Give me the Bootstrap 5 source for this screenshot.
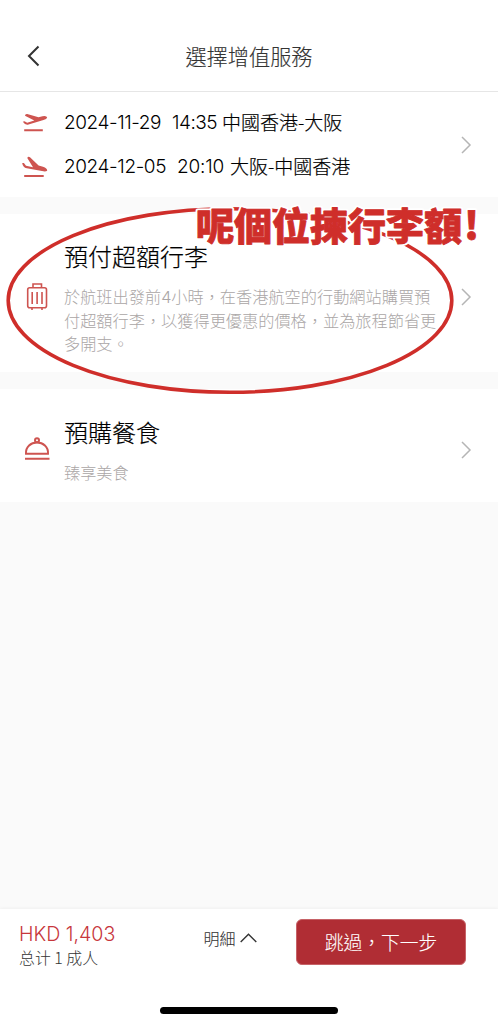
<!DOCTYPE html>
<html lang="zh-Hant">
<head>
<meta charset="utf-8">
<meta name="viewport" content="width=device-width, initial-scale=1">
<title>選擇增值服務</title>
<link href="https://cdn.jsdelivr.net/npm/bootstrap@5.3.0/dist/css/bootstrap.min.css" rel="stylesheet">
<style>
body{font-family:"Noto Sans CJK TC",sans-serif;background:#fafafa;color:#000;height:1024px;overflow:hidden}
svg{display:block;flex-shrink:0}
.latin{font-family:Inter,"Liberation Sans",sans-serif;display:inline-block;white-space:pre;font-weight:300;-webkit-text-stroke:0}
.top-bar{height:92px;padding:20px 26px 0;border-bottom:1px solid #e6e6e6}
.top-title{font-size:21.2px;font-weight:300;color:#333;padding-right:15px;-webkit-text-stroke:.15px #333}
.flights{height:105px;padding:9px 26px 9px 22px}
.flight-line{height:44px;font-size:19px;font-weight:300;line-height:44px;white-space:nowrap;-webkit-text-stroke:.2px #000}
.flight-line .route{line-height:42px;height:44px}
.flight-line .latin{font-weight:350}
.flight-icon{width:42px}
.date-a{width:108px;letter-spacing:-.42px}
.time-a{width:50px;letter-spacing:-.5px}
.date-b{width:113px;letter-spacing:-.4px}
.time-b{width:53px;letter-spacing:-.2px}
.service{margin-top:17px;padding:0 26px 0 22px}
.luggage{height:158px;padding-top:8px}
.meal{height:113px}
.service-name{font-size:24px;line-height:34px;font-weight:300;margin:0 0 12px;-webkit-text-stroke:.2px #000}
.service-note{font-size:16.200px;line-height:22.800px;font-weight:300;color:#aaa6a6;margin:0;white-space:nowrap}
.red{color:#ce5450}
.bottom-bar{height:115px;box-shadow:0 -1px 3px rgba(0,0,0,.045)}
.total{width:115px;margin-left:19px;padding-top:12px}
.price{font-size:19.600px;line-height:24px;color:#c7363b;white-space:nowrap}
.price .latin{font-weight:350}
.people{font-size:15.900px;line-height:23px;font-weight:300;color:#333}
.details{font-size:16px;font-weight:300;color:#333;height:24px;margin:17px 0 0 69.500px;-webkit-text-stroke:.1px #333}
.btn-next,.btn-next:hover{width:170px;height:46px;margin:10px 32px 0 auto;background:#b02d34;color:#fff;border:1px solid #c66267;border-radius:6px;font-size:18.800px;font-weight:300;padding:0;line-height:44px;-webkit-text-stroke:.1px #fff}
.home-line{width:178px;height:7px;border-radius:4px;background:#000;left:160px;bottom:10px}
.mark-up{left:0;top:0;pointer-events:none}
.mark-up text{font-family:"Noto Sans CJK TC",sans-serif;font-weight:900;font-size:38px;fill:#cf2e2a;stroke:#cf2e2a;stroke-width:.8px;stroke-linejoin:round}
.mark-up .halo{fill:#fff;stroke:#fff;stroke-width:4.500px}
</style>
<script src="https://cdn.jsdelivr.net/npm/bootstrap@5.3.0/dist/js/bootstrap.bundle.min.js"></script>
</head>
<body class="d-flex flex-column position-relative">
<header class="top-bar bg-white d-flex align-items-center">
  <svg width="15" height="22" viewBox="0 0 15 22" fill="none" stroke="#333" stroke-width="2"><path d="M12.500 1.500 3 11l9.500 9.500"/></svg>
  <div class="top-title flex-grow-1 text-center">選擇增值服務</div>
</header>
<section class="flights bg-white d-flex align-items-center">
  <div class="flex-grow-1">
    <div class="flight-line d-flex align-items-center">
      <div class="flight-icon red"><svg width="26" height="20" viewBox="0 0 26 20" fill="currentColor"><path d="M.8 8.800 2.500 8.300 5.200 9.800 12.300 7.500 3 2.700Q3 .9 5.200 1.100L16.500 4.300 20.500 3.200Q24.500 2.300 25.200 4.500 24.800 6.200 21.500 7L6.500 11.500Q3.200 12.400.8 8.800ZM2.200 16.300h18.600v1.900H2.200z"/></svg></div>
      <span class="latin date-a">2024-11-29</span><span class="latin time-a">14:35</span><span class="route">中國香港-大阪</span>
    </div>
    <div class="flight-line d-flex align-items-center">
      <div class="flight-icon red"><svg width="26" height="24" viewBox="0 0 26 24" fill="currentColor"><path d="M.2 8 1.900 8.100 4 10.800 11 12.200 5.300 3Q6 1 8 2.200L16.600 10.600 21 11.700Q25.300 13 25.200 15.800 23.500 17 20 16.100L4.800 13.300Q.8 12.400.2 8ZM2.200 20h19.500v2H2.200z"/></svg></div>
      <span class="latin date-b">2024-12-05</span><span class="latin time-b">20:10</span><span class="route">大阪-中國香港</span>
    </div>
  </div>
  <svg width="11" height="18" viewBox="0 0 11 18" fill="none" stroke="#b5b5b5" stroke-width="1.500"><path d="m1 1 8 8-8 8"/></svg>
</section>
<main class="flex-grow-1">
  <section class="service luggage bg-white d-flex align-items-center">
    <div class="flight-icon red"><svg width="30" height="30" viewBox="0 0 30 30" fill="none" stroke="currentColor" stroke-width="1.600"><rect x="5.700" y="5.800" width="18.800" height="20" rx="2"/><path d="M11 5.800V2h8.500v3.800M10.200 10v12M15.100 10v12M20 10v12M10 26v2M20 26v2"/></svg></div>
    <div class="flex-grow-1">
      <h2 class="service-name">預付超額行李</h2>
      <p class="service-note">於航班出發前<span class="latin">4</span>小時，在香港航空的行動網站購買預<br>付超額行李，以獲得更優惠的價格，並為旅程節省更<br>多開支。</p>
    </div>
    <svg width="11" height="18" viewBox="0 0 11 18" fill="none" stroke="#b5b5b5" stroke-width="1.500"><path d="m1 1 8 8-8 8"/></svg>
  </section>
  <section class="service meal bg-white d-flex align-items-center">
    <div class="flight-icon red"><svg class="mt-2" width="30" height="26" viewBox="0 0 30 26" fill="none" stroke="currentColor" stroke-width="2"><circle cx="15" cy="3.300" r="2"/><path d="M4 16.800C3.500 9.600 9 5.500 15 5.500S26.500 9.600 26 16.800ZM3 21.800h24.500"/></svg></div>
    <div class="flex-grow-1 pt-2">
      <h2 class="service-name">預購餐食</h2>
      <p class="service-note">臻享美食</p>
    </div>
    <svg class="mt-2" width="11" height="18" viewBox="0 0 11 18" fill="none" stroke="#b5b5b5" stroke-width="1.500"><path d="m1 1 8 8-8 8"/></svg>
  </section>
</main>
<footer class="bottom-bar bg-white position-relative">
  <div class="d-flex align-items-start">
    <div class="total">
      <div class="price"><span class="latin">HKD 1,403</span></div>
      <div class="people" lang="zh-Hans">总计 1 成人</div>
    </div>
    <div class="details d-flex align-items-center">明細
      <svg class="ms-1" width="17" height="10" viewBox="0 0 17 10" fill="none" stroke="#333" stroke-width="1.400"><path d="m.7 9 7.800-7.800L16.300 9"/></svg>
    </div>
    <button class="btn btn-next">跳過，下一步</button>
  </div>
  <div class="home-line position-absolute"></div>
</footer>
<svg class="mark-up position-absolute" width="498" height="420" viewBox="0 0 498 420">
  <ellipse cx="230" cy="300.500" rx="221.800" ry="91.800" fill="none" stroke="#cf2e2a" stroke-width="3.600"/>
  <text class="halo" x="196" y="240" aria-hidden="true">呢個位揀行李額<tspan dx="2">!</tspan></text>
  <text x="196" y="240">呢個位揀行李額<tspan dx="2">!</tspan></text>
</svg>
</body>
</html>
